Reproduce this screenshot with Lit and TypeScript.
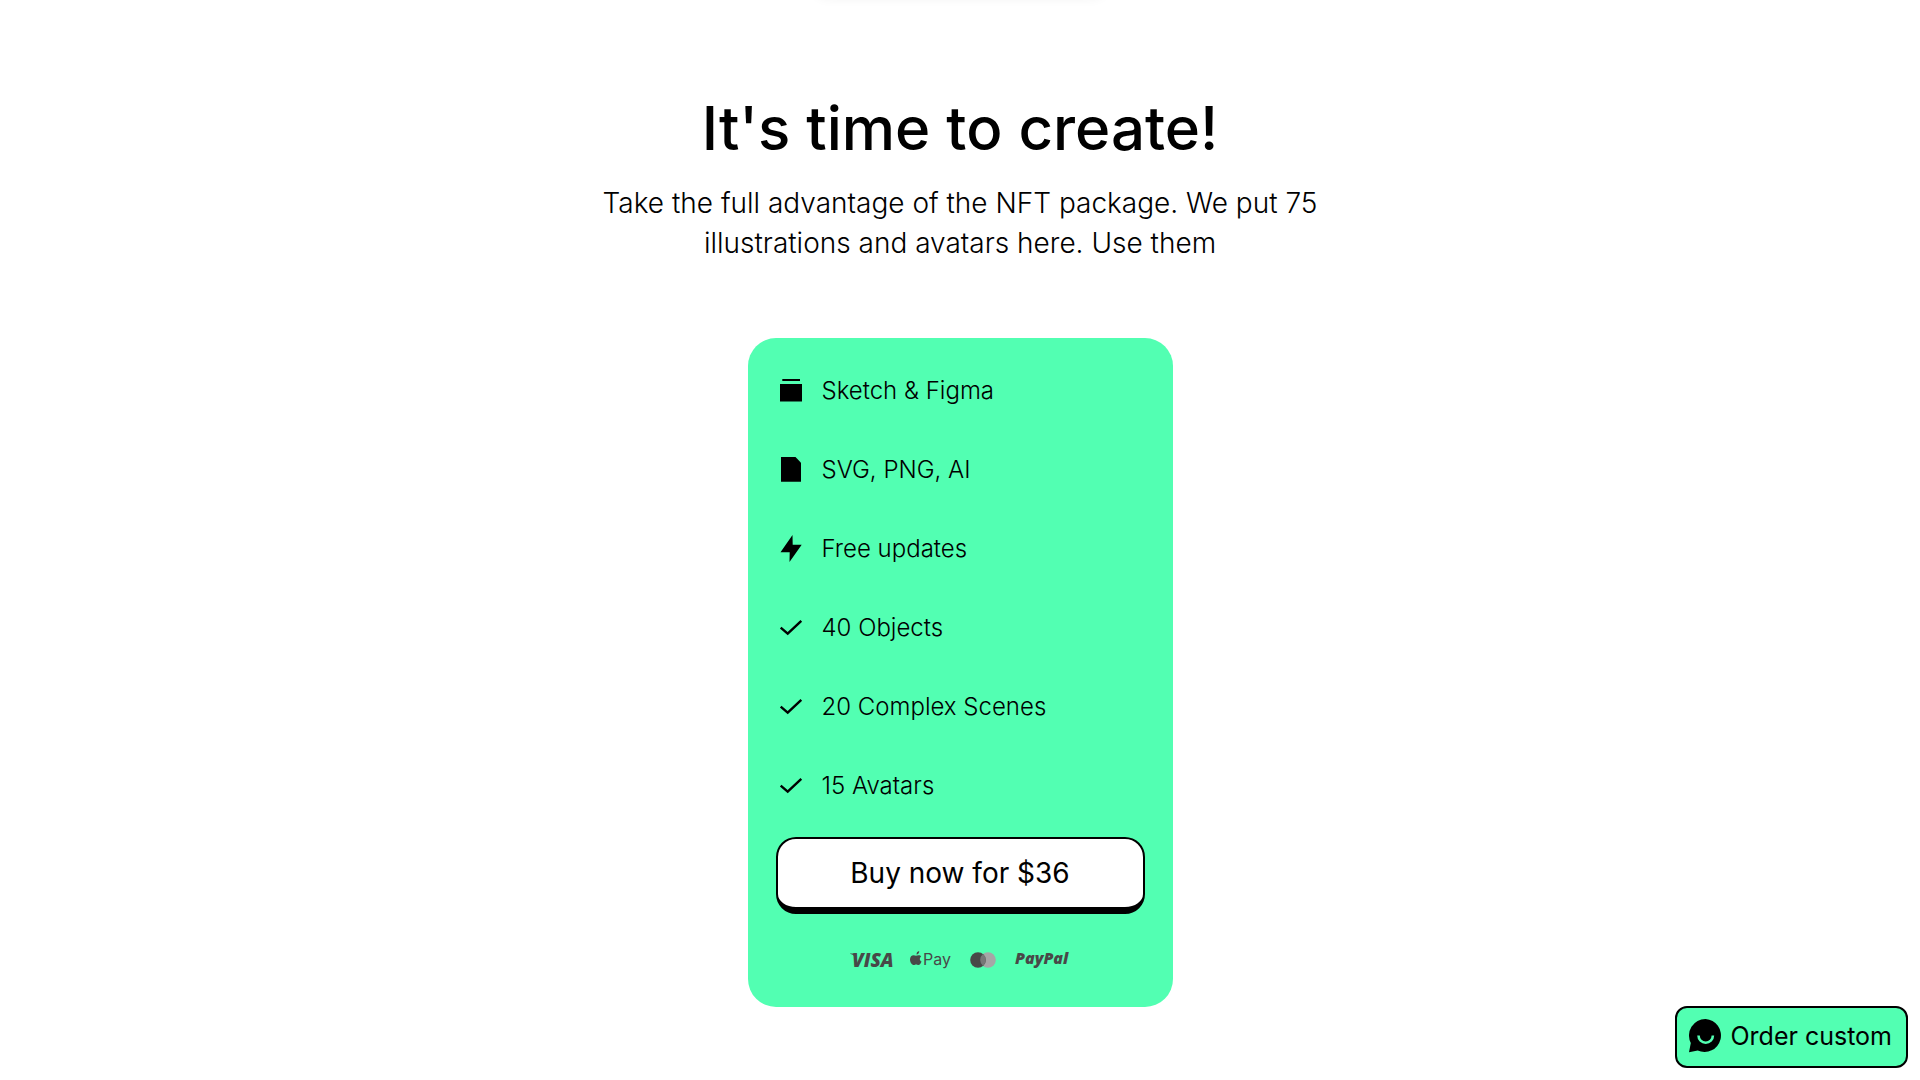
import { LitElement, html, css, svg } from "lit";
import { customElement } from "lit/decorators.js";

const box = svg`<path d="M6.300 3H24v2H6.300zM4 8h22v17.500H4z" />`;
const file = svg`<path d="M5 2h14.500L25 7.800v18.900H5z" />`;
const bolt = svg`<path d="M16.500 1 4.500 18.300h9.200L13.500 28l12.200-17.300H16.700z" />`;
const check = svg`<path d="m4.700 14.700 7 6L25.300 7.900" fill="none" stroke="currentColor" stroke-width="2.400" />`;

const features = [
  { icon: box, label: "Sketch & Figma" },
  { icon: file, label: "SVG, PNG, AI" },
  { icon: bolt, label: "Free updates" },
  { icon: check, label: "40 Objects" },
  { icon: check, label: "20 Complex Scenes" },
  { icon: check, label: "15 Avatars" },
];

@customElement("price-card")
class PriceCard extends LitElement {
  static styles = css`
    :host {
      display: block;
      width: 100%;
      max-width: 425px;
    }
    .card {
      box-sizing: border-box;
      display: flex;
      flex-direction: column;
      padding: 29px 28px 28px;
      border-radius: 28px;
      background: #52ffb2;
    }
    .features {
      list-style: none;
      margin: 0;
      padding: 0 0 27px;
      display: flex;
      flex-direction: column;
      gap: 31px;
    }
    .feature {
      display: flex;
      align-items: center;
      gap: 16px;
      font-size: 24px;
      font-weight: 300;
      line-height: 48px;
    }
    .icon {
      width: 30px;
      height: 30px;
      fill: currentColor;
      flex: none;
    }
    .buy {
      padding: 15px 20px;
      border: 2px solid #000;
      border-bottom-width: 7px;
      border-radius: 20px;
      background: #fff;
      color: #000;
      font: 400 28px/38px Inter, sans-serif;
      cursor: pointer;
    }
    .methods {
      display: flex;
      justify-content: center;
      align-items: center;
      gap: 18px;
      height: 24px;
      padding: 34px 0 7px;
      color: #484848;
    }
    .methods svg {
      display: block;
      overflow: visible;
      fill: currentColor;
    }
    .visa {
      font: italic 800 19px "Open Sans", sans-serif;
    }
    .pay {
      font: 400 16px Inter, sans-serif;
    }
    .paypal {
      font: italic 800 16px "Open Sans", sans-serif;
    }
  `;

  render() {
    return html`
      <section class="card" aria-label="Package">
        <ul class="features">
          ${features.map(
            (f) => html`<li class="feature">
              <svg class="icon" viewBox="0 0 30 30" aria-hidden="true">${f.icon}</svg>
              <span>${f.label}</span>
            </li>`,
          )}
        </ul>
        <button class="buy" type="button">Buy now for $36</button>
        <div class="methods">
          <svg width="42" height="24" viewBox="0 0 42 24">
            <path d="M0 5.400h5.500v2.200L4.600 8.500Q3 6.500 0 5.700z" />
            <text class="visa" x="2" y="19">VISA</text>
          </svg>
          <svg width="41" height="24" viewBox="0 0 41 24">
            <g transform="translate(-1 3)">
              <path
                d="M7.500 3.500c0-2 1-3.200 2.700-3.500C10.300 2 9.200 3.500 7.500 3.500zM4.600 4.200c1 0 1.700.500 2.400.500s1.600-.600 2.800-.500c1 0 1.900.500 2.400 1.200-2 1.300-1.700 4.200.400 5.100-.700 1.700-1.800 3.500-3.200 3.500-.900 0-1.200-.500-2.200-.500s-1.400.500-2.300.500C2.800 14 1 11 1 8.400c0-2.600 1.700-4.200 3.600-4.200z"
              />
            </g>
            <text class="pay" x="13" y="17">Pay</text>
          </svg>
          <svg width="28" height="24" viewBox="0 0 28 24" role="img" aria-label="Mastercard">
            <circle cx="19" cy="12" r="7.800" fill="#a6a6a6" />
            <circle cx="9" cy="12" r="7.800" />
            <path d="M14 6a7.800 7.800 0 0 1 0 12 7.800 7.800 0 0 1 0-12z" fill="#777" />
          </svg>
          <svg width="56" height="24" viewBox="0 0 56 24">
            <text class="paypal" x="0" y="16">PayPal</text>
          </svg>
        </div>
      </section>
    `;
  }
}

@customElement("app-root")
class AppRoot extends LitElement {
  static styles = css`
    :host {
      display: block;
      position: relative;
      min-height: 100vh;
      overflow: hidden;
      background: #fff;
      color: #000;
      font-family: Inter, sans-serif;
    }
    .menu {
      position: absolute;
      top: -70px;
      left: 50%;
      width: 300px;
      height: 64px;
      margin-left: -150px;
      border-radius: 20px;
      box-shadow: 0 4px 12px rgba(0, 0, 0, 0.06);
    }
    .page {
      display: flex;
      flex-direction: column;
      align-items: center;
      padding: 92px 20px 72px;
    }
    .title {
      margin: 0;
      font-size: 60px;
      font-weight: 500;
      line-height: 72px;
      text-align: center;
    }
    .lead {
      max-width: 740px;
      margin: 19px 0 75px;
      font-size: 28px;
      font-weight: 300;
      line-height: 40px;
      text-align: center;
    }
    .order {
      position: fixed;
      right: 12px;
      bottom: 12px;
      display: flex;
      align-items: center;
      gap: 7px;
      padding: 9px 14px 11px 12px;
      border: 2px solid #000;
      border-radius: 12px;
      background: #52ffb2;
      color: #000;
      font-size: 25px;
      line-height: 38px;
      text-decoration: none;
    }
    .chat {
      width: 34px;
      height: 34px;
    }
  `;

  render() {
    return html`
      <div class="menu"></div>
      <main class="page">
        <h1 class="title">It's time to create!</h1>
        <p class="lead">
          Take the full advantage of the NFT package. We put 75 illustrations and avatars here. Use them
        </p>
        <price-card></price-card>
      </main>
      <a class="order" href="#order">
        <svg class="chat" viewBox="0 0 34 34" aria-hidden="true">
          <path d="M16.700 0a16.500 16.500 0 1 1-8 31.500L0 33.300l1.800-9.300A16.500 16.500 0 0 1 16.700 0z" />
          <path d="M9.500 16.500a7.200 7.200 0 0 0 14.400 0" fill="none" stroke="#52ffb2" stroke-width="2.600" />
        </svg>
        <span>Order custom</span>
      </a>
    `;
  }
}
